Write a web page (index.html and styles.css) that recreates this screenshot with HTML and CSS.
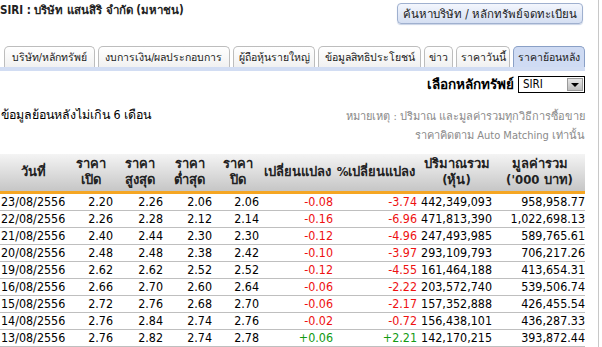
FILE: index.html
```html
<!DOCTYPE html>
<html lang="th">

<head>
    <meta charset="UTF-8">
    <title>SIRI - ราคาย้อนหลัง</title>
    <link rel="stylesheet" href="styles.css">
</head>

<body>
    <div class="page">
        <div class="main">
            <div class="topBar">
                <h1 class="title">SIRI : บริษัท แสนสิริ จำกัด (มหาชน)</h1>
                <button class="searchBtn">ค้นหาบริษัท / หลักทรัพย์จดทะเบียน</button>
            </div>

            <ul class="tabs">
                <li class="tab tabCompany">บริษัท/หลักทรัพย์</li>
                <li class="tab tabFinance">งบการเงิน/ผลประกอบการ</li>
                <li class="tab tabHolders">ผู้ถือหุ้นรายใหญ่</li>
                <li class="tab tabRights">ข้อมูลสิทธิประโยชน์</li>
                <li class="tab tabNews">ข่าว</li>
                <li class="tab tabToday">ราคาวันนี้</li>
                <li class="tab tabHistory active">ราคาย้อนหลัง</li>
            </ul>
            <div class="tabLine"></div>

            <div class="pickRow">
                <span class="pickLabel">เลือกหลักทรัพย์</span>
                <div class="selectBox">
                    <span class="selectValue">SIRI</span>
                    <span class="selectArrow"><span class="tri"></span></span>
                </div>
            </div>

            <div class="infoRow">
                <div class="period">ข้อมูลย้อนหลังไม่เกิน 6 เดือน</div>
                <div class="note">หมายเหตุ : ปริมาณ และมูลค่ารวมทุกวิธีการซื้อขาย<br>ราคาคิดตาม Auto Matching เท่านั้น</div>
            </div>

            <table class="priceTable">
                <colgroup>
                    <col class="cDate">
                    <col class="cOpen">
                    <col class="cHigh">
                    <col class="cLow">
                    <col class="cClose">
                    <col class="cChg">
                    <col class="cPct">
                    <col class="cVol">
                    <col class="cVal">
                </colgroup>
                <thead>
                    <tr>
                        <th>วันที่</th>
                        <th>ราคา<br>เปิด</th>
                        <th>ราคา<br>สูงสุด</th>
                        <th>ราคา<br>ต่ำสุด</th>
                        <th>ราคา<br>ปิด</th>
                        <th>เปลี่ยนแปลง</th>
                        <th>%เปลี่ยนแปลง</th>
                        <th>ปริมาณรวม<br>(หุ้น)</th>
                        <th>มูลค่ารวม<br>('000 บาท)</th>
                    </tr>
                </thead>
                <tbody>
                    <tr><td>23/08/2556</td><td>2.20</td><td>2.26</td><td>2.06</td><td>2.06</td><td class="down">-0.08</td><td class="down">-3.74</td><td>442,349,093</td><td>958,958.77</td></tr>
                    <tr><td>22/08/2556</td><td>2.26</td><td>2.28</td><td>2.12</td><td>2.14</td><td class="down">-0.16</td><td class="down">-6.96</td><td>471,813,390</td><td>1,022,698.13</td></tr>
                    <tr><td>21/08/2556</td><td>2.40</td><td>2.44</td><td>2.30</td><td>2.30</td><td class="down">-0.12</td><td class="down">-4.96</td><td>247,493,985</td><td>589,765.61</td></tr>
                    <tr><td>20/08/2556</td><td>2.48</td><td>2.48</td><td>2.38</td><td>2.42</td><td class="down">-0.10</td><td class="down">-3.97</td><td>293,109,793</td><td>706,217.26</td></tr>
                    <tr><td>19/08/2556</td><td>2.62</td><td>2.62</td><td>2.52</td><td>2.52</td><td class="down">-0.12</td><td class="down">-4.55</td><td>161,464,188</td><td>413,654.31</td></tr>
                    <tr><td>16/08/2556</td><td>2.66</td><td>2.70</td><td>2.60</td><td>2.64</td><td class="down">-0.06</td><td class="down">-2.22</td><td>203,572,740</td><td>539,506.74</td></tr>
                    <tr><td>15/08/2556</td><td>2.72</td><td>2.76</td><td>2.68</td><td>2.70</td><td class="down">-0.06</td><td class="down">-2.17</td><td>157,352,888</td><td>426,455.54</td></tr>
                    <tr><td>14/08/2556</td><td>2.76</td><td>2.84</td><td>2.74</td><td>2.76</td><td class="down">-0.02</td><td class="down">-0.72</td><td>156,438,101</td><td>436,287.33</td></tr>
                    <tr><td>13/08/2556</td><td>2.76</td><td>2.82</td><td>2.74</td><td>2.78</td><td class="up">+0.06</td><td class="up">+2.21</td><td>142,170,215</td><td>393,872.44</td></tr>
                </tbody>
            </table>
        </div>
    </div>
</body>

</html>
```

FILE: styles.css
```css
* {
    margin: 0;
    padding: 0;
    box-sizing: border-box;
}

body {
    background-color: white;
    font-family: "DejaVu Sans Condensed", "DejaVu Sans", sans-serif;
    font-stretch: condensed;
    font-size: 12.4px;
    color: #000;
}

.page {
    width: 599px;
    height: 347px;
    border-right: 1px solid #c8c8c8;
    overflow: hidden;
}

.main {
    width: 585px;
}

.topBar {
    display: flex;
    justify-content: space-between;
    align-items: flex-start;
    height: 46px;
    padding-top: 3px;
}

.title {
    font-size: 11.5px;
    font-weight: bold;
    color: #222;
    line-height: 14px;
}

.searchBtn {
    width: 186px;
    height: 21px;
    margin-right: 2px;
    border: 1px solid #9fb0cf;
    border-radius: 4px;
    background: linear-gradient(#f3f6fd, #d5dff2);
    font-family: inherit;
    font-stretch: condensed;
    font-size: 11.5px;
    color: #1a1a1a;
    box-shadow: 0 1px 1px #c9d3e6;
}

.tabs {
    list-style: none;
    display: flex;
    gap: 3px;
    padding-left: 4px;
    height: 21px;
}

.tab {
    display: flex;
    justify-content: center;
    height: 21px;
    border: 1px solid #bdbdbd;
    border-bottom: none;
    border-radius: 5px 5px 0 0;
    background: linear-gradient(#ffffff, #f1f1f1);
    font-size: 10.5px;
    line-height: 20px;
    color: #1a1a1a;
    white-space: nowrap;
}

.tabCompany { width: 91px; }
.tabFinance { width: 132px; }
.tabHolders { width: 83px; }
.tabRights { width: 103px; }
.tabNews { width: 29px; }
.tabToday { width: 54px; }
.tabHistory { width: 72px; }

.tab.active {
    background: #cfdbf3;
    border-color: #8aa0c6;
}

.tabLine {
    height: 4px;
    background-color: #d2ddf3;
}

.pickRow {
    display: flex;
    justify-content: flex-end;
    align-items: center;
    gap: 4px;
    height: 20px;
    margin-top: 3px;
}

.pickLabel {
    font-weight: bold;
    font-size: 13.5px;
}

.selectBox {
    display: flex;
    align-items: center;
    justify-content: space-between;
    width: 67px;
    height: 17px;
    border: 1px solid #000;
    padding: 0 1px 0 4px;
    background: white;
}

.selectValue {
    font-size: 11.5px;
}

.selectArrow {
    display: flex;
    align-items: center;
    justify-content: center;
    width: 16px;
    height: 13px;
    background: linear-gradient(#e6e6e6, #bdbdbd);
    border: 1px solid #9a9a9a;
}

.tri {
    width: 0;
    height: 0;
    border-left: 4px solid transparent;
    border-right: 4px solid transparent;
    border-top: 4px solid #000;
    margin-top: 2px;
}

.infoRow {
    display: flex;
    justify-content: space-between;
    align-items: flex-start;
    height: 50px;
    margin-top: 10px;
}

.period {
    font-size: 12.4px;
    padding-left: 1px;
    padding-top: 1px;
}

.note {
    text-align: right;
    color: #8a8a8a;
    font-size: 11px;
    line-height: 19px;
    padding-top: 3px;
}

.priceTable {
    width: 585px;
    table-layout: fixed;
    border-collapse: collapse;
}

.cDate { width: 67px; }
.cOpen { width: 48px; }
.cHigh { width: 50px; }
.cLow { width: 49px; }
.cClose { width: 47px; }
.cChg { width: 72px; }
.cPct { width: 86px; }
.cVol { width: 75px; }
.cVal { width: 91px; }

.priceTable th {
    height: 38px;
    padding: 0;
    background: linear-gradient(#f4f4f4, #c6c6c6);
    border-bottom: 3px solid #f5a623;
    font-size: 13px;
    font-weight: bold;
    color: #222;
    line-height: 16px;
    text-align: center;
    white-space: nowrap;
}

.priceTable td {
    height: 17px;
    border-bottom: 1px solid #bfbfbf;
    padding: 0 2px 0 0;
    text-align: right;
    line-height: 16px;
    white-space: nowrap;
}

.priceTable td:first-child {
    text-align: left;
    padding-left: 1px;
}

.priceTable td:nth-child(6) {
    padding-right: 0;
}

.priceTable td:last-child {
    padding-right: 0;
}

.down {
    color: #ee1111;
}

.up {
    color: #129a12;
}
```
